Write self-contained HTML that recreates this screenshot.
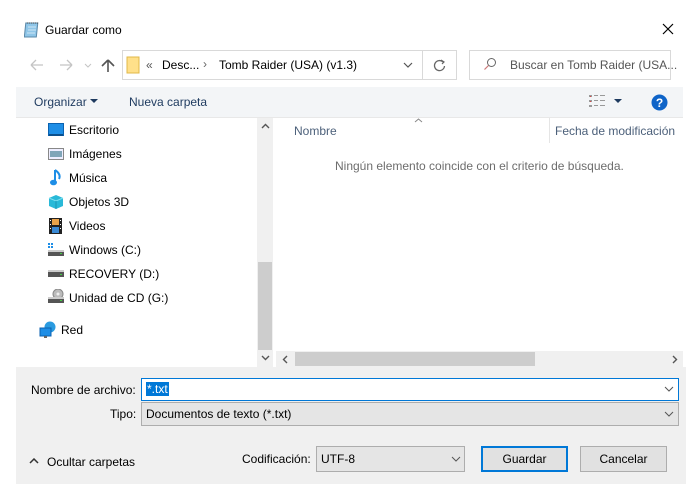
<!DOCTYPE html>
<html><head><meta charset="utf-8"><style>
*{margin:0;padding:0;box-sizing:border-box}
body{width:700px;height:500px;background:#fff;font-family:"Liberation Sans",sans-serif;font-size:12px;color:#000;position:relative;overflow:hidden}
.a{position:absolute;white-space:nowrap}
.t{line-height:14px}
</style></head><body>
<!-- title -->
<svg class="a" style="left:24px;top:21px" width="16" height="17"><rect x="2" y="2" width="12" height="14" fill="#8fc6e8" stroke="#5a88a8" transform="skewX(-6)"/><line x1="3" y1="2" x2="14" y2="2" stroke="#444" stroke-dasharray="1 1"/><line x1="4" y1="6" x2="12" y2="6" stroke="#cfe6f5"/><line x1="4" y1="9" x2="12" y2="9" stroke="#cfe6f5"/><line x1="3" y1="12" x2="11" y2="12" stroke="#cfe6f5"/></svg>
<div class="a t" style="left:45px;top:23px">Guardar como</div>
<svg class="a" style="left:662px;top:23px" width="12" height="12"><path d="M1 1L11 11M11 1L1 11" stroke="#000" stroke-width="1.2"/></svg>
<!-- nav -->
<svg class="a" style="left:28px;top:57px" width="90" height="16"><path d="M3 8H15M3 8L8 3M3 8L8 13" stroke="#c4c4c4" stroke-width="1.3" fill="none"/><path d="M44 8H32M44 8L39 3M44 8L39 13" stroke="#c4c4c4" stroke-width="1.3" fill="none"/><path d="M57 7L60 10L63 7" stroke="#c4c4c4" fill="none"/><path d="M80 15V3M80 3L74 9M80 3L86 9" stroke="#555" stroke-width="1.6" fill="none"/></svg>
<div class="a" style="left:122px;top:50px;width:335px;height:30px;border:1px solid #d9d9d9"></div>
<div class="a" style="left:422px;top:51px;width:1px;height:28px;background:#d9d9d9"></div>
<svg class="a" style="left:126px;top:56px" width="14" height="18"><rect x="1" y="1" width="12" height="16" fill="#ffe08a" stroke="#e0b848"/></svg>
<div class="a t" style="left:146px;top:58px;color:#555">«</div>
<div class="a t" style="left:162px;top:58px">Desc...</div>
<div class="a t" style="left:203px;top:57px;color:#666">›</div>
<div class="a t" style="left:219px;top:58px">Tomb Raider (USA) (v1.3)</div>
<svg class="a" style="left:403px;top:61px" width="10" height="8"><path d="M1 2L5 6L9 2" stroke="#555" stroke-width="1.2" fill="none"/></svg>
<svg class="a" style="left:433px;top:58px" width="14" height="14"><path d="M10 4A5 5 0 1 0 11.5 8" stroke="#666" stroke-width="1.3" fill="none"/><path d="M8 2L11 4L9 6" stroke="#666" stroke-width="1.2" fill="none"/></svg>
<div class="a" style="left:469px;top:50px;width:202px;height:30px;border:1px solid #d9d9d9"></div>
<svg class="a" style="left:483px;top:57px" width="14" height="14"><circle cx="8.5" cy="5.5" r="4" stroke="#666" fill="none"/><path d="M5.5 8.5L1.5 12.5" stroke="#c77" stroke-width="1.2"/></svg>
<div class="a t" style="left:510px;top:58px;color:#555">Buscar en Tomb Raider (USA...</div>
<!-- toolbar -->
<div class="a" style="left:16px;top:87px;width:667px;height:31px;background:#f3f5f7;border-bottom:1px solid #e8e8e8"></div>
<div class="a t" style="left:34px;top:95px;color:#1e3a5f">Organizar</div>
<svg class="a" style="left:90px;top:99px" width="8" height="5"><path d="M0 0H8L4 4Z" fill="#1e3a5f"/></svg>
<div class="a t" style="left:129px;top:95px;color:#1e3a5f">Nueva carpeta</div>
<svg class="a" style="left:589px;top:95px" width="18" height="12"><g fill="#999"><rect x="0" y="0" width="3" height="2"/><rect x="0" y="5" width="3" height="2"/><rect x="0" y="10" width="3" height="2"/><rect x="5" y="0" width="4" height="1"/><rect x="11" y="0" width="5" height="1"/><rect x="5" y="5" width="4" height="1"/><rect x="11" y="5" width="5" height="1"/><rect x="5" y="10" width="4" height="1"/><rect x="11" y="10" width="5" height="1"/></g><rect x="1" y="1" width="1" height="1" fill="#d44"/><rect x="1" y="6" width="1" height="1" fill="#d44"/></svg>
<svg class="a" style="left:614px;top:99px" width="8" height="5"><path d="M0 0H8L4 4Z" fill="#1e3a5f"/></svg>
<svg class="a" style="left:651px;top:94px" width="17" height="17"><circle cx="8.5" cy="8.5" r="8" fill="#0f64c8"/><text x="8.5" y="13" font-size="12" font-weight="bold" fill="#fff" text-anchor="middle" font-family="Liberation Sans">?</text></svg>
<!-- nav pane -->
<svg class="a" style="left:48px;top:123px" width="16" height="14"><rect x="0.5" y="0.5" width="15" height="12" fill="#1e8ee6" stroke="#0b62b0"/><rect x="1" y="11" width="14" height="2" fill="#0b4f8c"/></svg>
<div class="a t" style="left:69px;top:123px">Escritorio</div>
<svg class="a" style="left:48px;top:148px" width="16" height="12"><rect x="0.5" y="0.5" width="15" height="11" fill="#eef" stroke="#888"/><rect x="2" y="3" width="12" height="6" fill="#7fa5b8"/></svg>
<div class="a t" style="left:69px;top:147px">Imágenes</div>
<svg class="a" style="left:50px;top:169px" width="12" height="17"><path d="M5 1V13" stroke="#1e8ee6" stroke-width="2"/><ellipse cx="3.5" cy="13.5" rx="3.5" ry="2.8" fill="#1e8ee6"/><path d="M5 1C8 3 11 6 9 10" stroke="#1e8ee6" stroke-width="2" fill="none"/></svg>
<div class="a t" style="left:69px;top:171px">Música</div>
<svg class="a" style="left:48px;top:194px" width="16" height="16"><path d="M8 1L15 4V12L8 15L1 12V4Z" fill="#29b9d8"/><path d="M1 4L8 7L15 4" stroke="#7fe0f0" fill="none"/><path d="M8 7V15" stroke="#1a95b5"/></svg>
<div class="a t" style="left:69px;top:195px">Objetos 3D</div>
<svg class="a" style="left:49px;top:218px" width="13" height="16"><rect x="0" y="0" width="13" height="16" fill="#222"/><rect x="3" y="1" width="7" height="6" fill="#e8a24a"/><rect x="3" y="9" width="7" height="6" fill="#3a8ad6"/><g fill="#fff"><rect x="1" y="2" width="1" height="1"/><rect x="1" y="6" width="1" height="1"/><rect x="1" y="10" width="1" height="1"/><rect x="11" y="2" width="1" height="1"/><rect x="11" y="6" width="1" height="1"/><rect x="11" y="10" width="1" height="1"/></g></svg>
<div class="a t" style="left:69px;top:219px">Videos</div>
<svg class="a" style="left:48px;top:243px" width="16" height="14"><g fill="#1e8ee6"><rect x="0" y="0" width="2" height="2"/><rect x="3" y="0" width="2" height="2"/><rect x="0" y="3" width="2" height="2"/><rect x="3" y="3" width="2" height="2"/></g><rect x="0" y="8" width="16" height="5" fill="#555"/><rect x="0" y="7" width="16" height="2" fill="#ccc"/><rect x="12" y="10" width="2" height="1" fill="#4c4"/></svg>
<div class="a t" style="left:69px;top:243px">Windows (C:)</div>
<svg class="a" style="left:48px;top:268px" width="16" height="10"><rect x="0" y="3" width="16" height="6" fill="#555"/><rect x="0" y="2" width="16" height="2" fill="#ccc"/><rect x="12" y="6" width="2" height="1" fill="#4c4"/></svg>
<div class="a t" style="left:69px;top:267px">RECOVERY (D:)</div>
<svg class="a" style="left:48px;top:289px" width="16" height="15"><circle cx="10" cy="5" r="5" fill="#bbb" stroke="#888"/><circle cx="10" cy="5" r="1.5" fill="#eee"/><rect x="0" y="9" width="16" height="5" fill="#555"/><rect x="0" y="8" width="16" height="2" fill="#ccc"/><rect x="12" y="11" width="2" height="1" fill="#4c4"/></svg>
<div class="a t" style="left:69px;top:291px">Unidad de CD (G:)</div>
<svg class="a" style="left:39px;top:321px" width="18" height="18"><circle cx="11" cy="6" r="5.5" fill="#2a9be0"/><rect x="1" y="7" width="11" height="8" fill="#1e8ee6" stroke="#0b62b0"/><rect x="5" y="15" width="3" height="2" fill="#666"/></svg>
<div class="a t" style="left:61px;top:323px">Red</div>
<!-- vertical scrollbar -->
<div class="a" style="left:257px;top:118px;width:16px;height:249px;background:#f0f0f0"></div>
<div class="a" style="left:258px;top:262px;width:14px;height:88px;background:#cdcdcd"></div>
<svg class="a" style="left:261px;top:123px" width="9" height="6"><path d="M1 5L4.5 1.5L8 5" stroke="#555" stroke-width="1.4" fill="none"/></svg>
<svg class="a" style="left:261px;top:355px" width="9" height="6"><path d="M1 1L4.5 4.5L8 1" stroke="#555" stroke-width="1.4" fill="none"/></svg>
<!-- right pane -->
<svg class="a" style="left:414px;top:118px" width="9" height="5"><path d="M1 4L4.5 1L8 4" stroke="#888" fill="none"/></svg>
<div class="a t" style="left:294px;top:124px;color:#4c607a">Nombre</div>
<div class="a" style="left:549px;top:118px;width:1px;height:25px;background:#e5e5e5"></div>
<div class="a t" style="left:555px;top:124px;color:#4c607a">Fecha de modificación</div>
<div class="a t" style="left:335px;top:159px;color:#6d6d6d">Ningún elemento coincide con el criterio de búsqueda.</div>
<!-- horizontal scrollbar -->
<div class="a" style="left:276px;top:351px;width:407px;height:16px;background:#f0f0f0"></div>
<div class="a" style="left:295px;top:352px;width:240px;height:14px;background:#cdcdcd"></div>
<svg class="a" style="left:282px;top:355px" width="6" height="9"><path d="M5 1L1.5 4.5L5 8" stroke="#555" stroke-width="1.4" fill="none"/></svg>
<svg class="a" style="left:672px;top:355px" width="6" height="9"><path d="M1 1L4.5 4.5L1 8" stroke="#555" stroke-width="1.4" fill="none"/></svg>
<!-- bottom -->
<div class="a" style="left:16px;top:367px;width:670px;height:117px;background:#f0f0f0"></div>
<div class="a t" style="left:31px;top:383px">Nombre de archivo:</div>
<div class="a" style="left:141px;top:378px;width:538px;height:23px;border:1px solid #0078d7;background:#fff"></div>
<div class="a t" style="left:146px;top:382px;background:#0078d7;color:#fff;padding:0 1px">*.txt</div>
<svg class="a" style="left:664px;top:386px" width="10" height="7"><path d="M1 1L5 5L9 1" stroke="#555" fill="none"/></svg>
<div class="a t" style="left:110px;top:407px">Tipo:</div>
<div class="a" style="left:141px;top:402px;width:538px;height:24px;border:1px solid #adadad;background:#e5e5e5"></div>
<div class="a t" style="left:146px;top:407px">Documentos de texto (*.txt)</div>
<svg class="a" style="left:664px;top:411px" width="10" height="7"><path d="M1 1L5 5L9 1" stroke="#555" fill="none"/></svg>
<svg class="a" style="left:29px;top:458px" width="10" height="7"><path d="M1 5L5 1L9 5" stroke="#333" stroke-width="1.5" fill="none"/></svg>
<div class="a t" style="left:47px;top:455px">Ocultar carpetas</div>
<div class="a t" style="left:242px;top:452px">Codificación:</div>
<div class="a" style="left:316px;top:446px;width:149px;height:26px;border:1px solid #adadad;background:#e5e5e5"></div>
<div class="a t" style="left:321px;top:452px">UTF-8</div>
<svg class="a" style="left:451px;top:456px" width="10" height="7"><path d="M1 1L5 5L9 1" stroke="#555" fill="none"/></svg>
<div class="a" style="left:481px;top:446px;width:87px;height:26px;border:2px solid #0078d7;background:#e1e1e1"></div>
<div class="a t" style="left:481px;top:452px;width:87px;text-align:center">Guardar</div>
<div class="a" style="left:580px;top:446px;width:87px;height:26px;border:1px solid #adadad;background:#e1e1e1"></div>
<div class="a t" style="left:580px;top:452px;width:87px;text-align:center">Cancelar</div>
</body></html>
